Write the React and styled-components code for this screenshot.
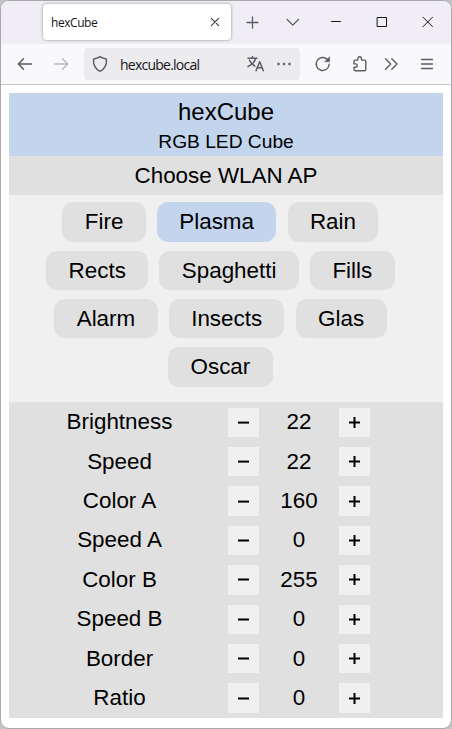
import React from "react";
import styled, { createGlobalStyle } from "styled-components";

const GlobalStyle = createGlobalStyle`
  * { box-sizing: border-box; }
  body { margin: 0; background: #c4c4c6; overflow: hidden; }
`;

const BrowserWindow = styled.div`
  width: 452px;
  height: 729px;
  display: flex;
  flex-direction: column;
  border: 1px solid #a9a9ab;
  border-radius: 9px;
  background: #fff;
  overflow: hidden;
`;

const TabStrip = styled.header`
  height: 43px;
  flex: none;
  display: flex;
  align-items: flex-start;
  padding-left: 42px;
  background: #f0eef4;
`;

const Tab = styled.div`
  width: 188px;
  height: 36px;
  margin-top: 3px;
  padding: 2px 8px 0;
  display: flex;
  align-items: center;
  justify-content: space-between;
  border-radius: 4px;
  background: #fff;
  box-shadow: 0 0 3px rgba(0, 0, 0, 0.42);
  font: 12px/34px "Open Sans", "Noto Sans", sans-serif;
  letter-spacing: -0.45px;
  color: #15141a;
`;

const Glyph = styled.svg`
  display: block;
  flex: none;
  width: ${(p) => p.$w || 20}px;
  height: 20px;
  margin-left: ${(p) => p.$gap || 0}px;
  margin-top: ${(p) => p.$top || 0}px;
  fill: none;
  stroke: ${(p) => p.$color || "#5b5b66"};
  stroke-width: ${(p) => p.$stroke || 1.3};
  stroke-linecap: round;
  stroke-linejoin: round;
`;

const Toolbar = styled.nav`
  height: 41px;
  flex: none;
  display: flex;
  align-items: center;
  padding-left: 14px;
  background: #f9f9fb;
  border-bottom: 1px solid #c9c9cc;
`;

const AddressBar = styled.div`
  width: 216px;
  height: 32px;
  margin-left: 13px;
  padding-left: 6px;
  display: flex;
  align-items: center;
  border-radius: 4px;
  background: #ececee;
`;

const Address = styled.span`
  width: 126px;
  margin-left: 10px;
  padding-top: 2px;
  font: 14px/20px "Open Sans", "Noto Sans", sans-serif;
  letter-spacing: -0.76px;
  color: #15141a;
`;

const Page = styled.main`
  margin: 8px 7px 0 8px;
  width: 434px;
  font-family: "Liberation Sans", Arial, sans-serif;
  font-size: 22.4px;
  color: #000;
  text-align: center;
`;

const Masthead = styled.div`
  height: 63px;
  padding-top: 5px;
  background: #c3d5ed;
`;

const Title = styled.h1`
  margin: 0;
  font-size: 24px;
  line-height: 28px;
  font-weight: 400;
`;

const Subtitle = styled.div`
  margin-top: 5px;
  font-size: 19.2px;
  line-height: 22px;
`;

const WlanLink = styled.div`
  height: 39px;
  line-height: 39px;
  background: #e0e0e0;
`;

const Programs = styled.div`
  height: 207px;
  padding: 7.3px 31.2px 0 20px;
  display: flex;
  flex-direction: column;
  gap: 8.9px;
  background: #f0f0f0;
`;

const ProgramRow = styled.div`
  display: flex;
  justify-content: center;
  gap: 11.2px;
`;

const Program = styled.button`
  height: 39.4px;
  padding: 0 22.4px;
  border: 0;
  border-radius: 11.2px;
  background: ${(p) => (p.$active ? "#c3d5ed" : "#e0e0e0")};
  font: inherit;
  line-height: 39.4px;
  color: inherit;
`;

const Settings = styled.div`
  height: 316px;
  padding-top: 0.3px;
  background: #e0e0e0;
`;

const Setting = styled.div`
  height: 39.4px;
  display: grid;
  grid-template-columns: 219px 31px 80px 31px;
  align-items: center;
  line-height: 40px;
`;

const Label = styled.span`
  padding-left: 2px;
`;

const Step = styled.button`
  height: 29.5px;
  padding: 0;
  display: block;
  border: 0;
  background: #f0f0f0;
`;

const Sign = styled.svg`
  display: block;
  width: 31px;
  height: 29px;
  stroke: #000;
  stroke-width: 2;
`;

const programs = [
  ["Fire", "Plasma", "Rain"],
  ["Rects", "Spaghetti", "Fills"],
  ["Alarm", "Insects", "Glas"],
  ["Oscar"],
];

const settings = [
  ["Brightness", 22],
  ["Speed", 22],
  ["Color A", 160],
  ["Speed A", 0],
  ["Color B", 255],
  ["Speed B", 0],
  ["Border", 0],
  ["Ratio", 0],
];

export default function App() {
  return (
    <>
      <GlobalStyle />
      <BrowserWindow>
        <TabStrip>
          <Tab>
            hexCube
            <Glyph $w={16} $top={-2} $color="#3b3b43" $stroke={1.1}>
              <path d="M4.3 6.3l7.4 7.4M11.7 6.3l-7.4 7.4" />
            </Glyph>
          </Tab>
          <Glyph $gap={12} $top={11}>
            <path d="M9.5 5v11M4 10.5h11" />
          </Glyph>
          <Glyph $gap={20} $top={11}>
            <path d="M4.2 7.5l5.6 5.6 5.6-5.6" />
          </Glyph>
          <Glyph $gap={23} $top={11} $color="#15141a" $stroke={1}>
            <path d="M5.5 9.5h9" />
          </Glyph>
          <Glyph $gap={27} $top={11} $color="#15141a" $stroke={1}>
            <path strokeLinejoin="miter" d="M4.5 5.5h9v9h-9z" />
          </Glyph>
          <Glyph $gap={26} $top={11} $color="#15141a" $stroke={1}>
            <path d="M4 5.2l9.5 9.5M13.5 5.2L4 14.7" />
          </Glyph>
        </TabStrip>
        <Toolbar>
          <Glyph $stroke={1.5}>
            <path d="M16.5 10h-13M8.5 4.8L3.3 10l5.2 5.2" />
          </Glyph>
          <Glyph $gap={16} $color="#bababf" $stroke={1.5}>
            <path d="M3.5 10h13M11.5 4.8l5.2 5.2-5.2 5.2" />
          </Glyph>
          <AddressBar>
            <Glyph $stroke={1.4}>
              <path d="M10 2.6C8 4.1 5.5 4.4 3.5 5.2c-.3 5.7 1.5 9.8 6.5 12.1 5-2.3 6.8-6.4 6.5-12.1-2-.8-4.5-1.1-6.5-2.6z" />
            </Glyph>
            <Address>hexcube.local</Address>
            <Glyph $stroke={1.5}>
              <path d="M2 4.3h9M6.5 2.5v1.8M3.5 6.3c1.1 2.8 3.2 4.5 5.2 5.7M9.5 4.5C8.8 8 6 10.6 2 12.6M10 16.7l3.7-9 3.7 9M11.3 13.7h4.8" />
            </Glyph>
            <Glyph $gap={8} $color="none">
              <g fill="#5b5b66">
                <circle cx="4.5" cy="10" r="1.3" />
                <circle cx="10" cy="10" r="1.3" />
                <circle cx="15.5" cy="10" r="1.3" />
              </g>
            </Glyph>
          </AddressBar>
          <Glyph $gap={13} $stroke={1.4}>
            <path d="M16.2 10.3a6.5 6.5 0 1 1-2-5" />
            <path d="M16.6 3v4.8h-4.8z" fill="#5b5b66" strokeWidth=".5" />
          </Glyph>
          <Glyph $gap={17} $stroke={1.4}>
            <path d="M4 9V7.2c0-.7.4-1.1 1.1-1.1h2.8V4.5a1.8 1.8 0 0 1 3.6 0v1.6h3c.9 0 1.3.4 1.3 1.3v8.1c0 .9-.4 1.3-1.3 1.3H5.3c-.9 0-1.3-.4-1.3-1.3v-2.2h1.6a1.7 1.7 0 0 0 0-3.4H4z" />
          </Glyph>
          <Glyph $gap={11} $stroke={1.4}>
            <path d="M4.5 4.8L9.7 10l-5.2 5.2M10.8 4.8L16 10l-5.2 5.2" />
          </Glyph>
          <Glyph $gap={16}>
            <path d="M4.5 5.5h11M4.5 10h11M4.5 14.5h11" />
          </Glyph>
        </Toolbar>
        <Page>
          <Masthead>
            <Title>hexCube</Title>
            <Subtitle>RGB LED Cube</Subtitle>
          </Masthead>
          <WlanLink>Choose WLAN AP</WlanLink>
          <Programs>
            {programs.map((row) => (
              <ProgramRow key={row[0]}>
                {row.map((name) => (
                  <Program key={name} $active={name === "Plasma"}>
                    {name}
                  </Program>
                ))}
              </ProgramRow>
            ))}
          </Programs>
          <Settings>
            {settings.map(([name, value]) => (
              <Setting key={name}>
                <Label>{name}</Label>
                <Step aria-label={`Decrease ${name}`}>
                  <Sign>
                    <path d="M10 14.6h11" />
                  </Sign>
                </Step>
                <span>{value}</span>
                <Step aria-label={`Increase ${name}`}>
                  <Sign>
                    <path d="M10 14.6h11M15.5 9.1v11" />
                  </Sign>
                </Step>
              </Setting>
            ))}
          </Settings>
        </Page>
      </BrowserWindow>
    </>
  );
}
